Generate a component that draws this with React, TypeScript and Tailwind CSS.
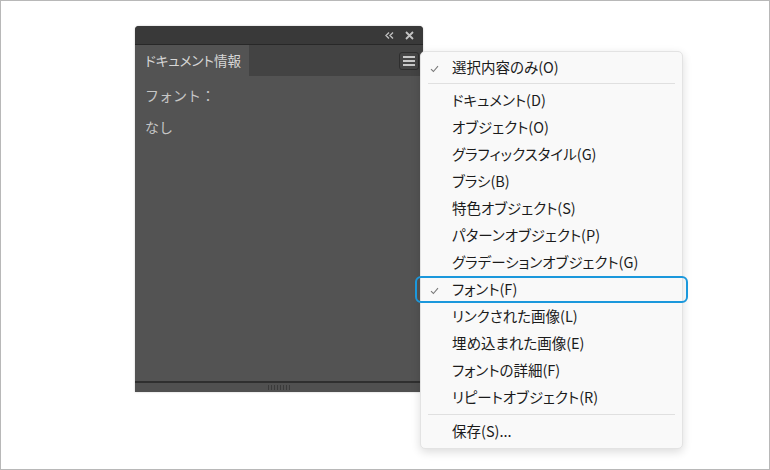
import React from "react";

const ITEMS = [
  "ドキュメント(D)",
  "オブジェクト(O)",
  "グラフィックスタイル(G)",
  "ブラシ(B)",
  "特色オブジェクト(S)",
  "パターンオブジェクト(P)",
  "グラデーションオブジェクト(G)",
  "フォント(F)",
  "リンクされた画像(L)",
  "埋め込まれた画像(E)",
  "フォントの詳細(F)",
  "リピートオブジェクト(R)",
];

const FONT = "[font-family:'Noto_Sans_CJK_JP','Noto_Sans',sans-serif]";
const PALT = "[font-feature-settings:'palt']";

function Check() {
  return (
    <svg width="9" height="8" viewBox="0 0 9 8" className="absolute left-[9px] top-1/2 -translate-y-1/2">
      <path d="M1 4.2 L3.4 6.5 L8 1.2" fill="none" stroke="#7a7a7a" strokeWidth="1.1" />
    </svg>
  );
}

function MenuItem({ label, checked, focused }: { label: string; checked?: boolean; focused?: boolean }) {
  return (
    <div className={`relative flex h-[27px] items-center pl-[31px] text-[14.5px] leading-none text-[#1b1b1b] ${PALT}`}>
      {checked && <Check />}
      <span className="-translate-y-[1px]">{label}</span>
      {focused && (
        <div className="absolute -left-[6px] -right-[6px] top-[-1px] bottom-[1px] rounded-[6px] border-2 border-[#1b98dc]" />
      )}
    </div>
  );
}

export default function App() {
  return (
    <div className={`relative h-[470px] w-[770px] overflow-hidden border border-[#b8b8b8] bg-white ${FONT}`}>
      <div className="pl-[134px] pt-[25px]">
        {/* Document info panel */}
        <div className="flex h-[366px] w-[288px] flex-col overflow-hidden rounded-t-[4px] bg-[#535353] shadow-[0_0_2px_rgba(0,0,0,0.25)]">
          <div className="flex h-[18px] items-center justify-end gap-[11px] bg-[#393939] pr-[9px] text-[#bdbdbd]">
            <svg width="9" height="7" viewBox="0 0 9 7">
              <path d="M4 0.5 L1 3.5 L4 6.5 M8 0.5 L5 3.5 L8 6.5" fill="none" stroke="#bdbdbd" strokeWidth="1.4" />
            </svg>
            <svg width="9" height="9" viewBox="0 0 9 9">
              <path d="M1 1 L8 8 M8 1 L1 8" stroke="#c4c4c4" strokeWidth="1.8" />
            </svg>
          </div>
          <div className="h-px bg-[#282828]" />
          <div className="flex h-[31px] items-stretch bg-[#434343]">
            <div className={`flex w-[114px] items-center bg-[#535353] pl-[10px] text-[13.5px] text-[#d6d6d6] ${PALT}`}>
              ドキュメント情報
            </div>
            <div className="flex flex-1 items-center justify-end pr-[4px]">
              <div className="flex h-[18px] w-[20px] flex-col items-center justify-center gap-[2px] rounded-[3px] border border-[#2e2e2e] bg-[#454545]">
                <div className="h-[2px] w-[12px] bg-[#c8c8c8]" />
                <div className="h-[2px] w-[12px] bg-[#c8c8c8]" />
                <div className="h-[2px] w-[12px] bg-[#c8c8c8]" />
              </div>
            </div>
          </div>
          <div className="flex flex-1 flex-col pl-[10px] pt-[9px] text-[14px] text-[#c6c6c6]">
            <div className="leading-[20px]">フォント：</div>
            <div className="mt-[12px] leading-[20px]">なし</div>
          </div>
          <div className="h-[2px] bg-[#2f2f2f]" />
          <div className="flex h-[9px] items-center justify-center bg-[#505050]">
            <div className="flex gap-[2px]">
              {Array.from({ length: 8 }).map((_, i) => (
                <div key={i} className="h-[5px] w-px bg-[#3a3a3a]" />
              ))}
            </div>
          </div>
        </div>
      </div>

      {/* Popup menu */}
      <div className="absolute left-[419px] top-[50px] w-[263px] rounded-[5px] border border-[#e3e3e3] bg-[#f9f9f9] pb-[2px] pt-[3px] shadow-[0_3px_10px_rgba(0,0,0,0.14)]">
        <MenuItem label="選択内容のみ(O)" checked />
        <div className="mx-[7px] mb-[4px] mt-[1px] h-px bg-[#e0e0e0]" />
        {ITEMS.map((label) => (
          <MenuItem key={label} label={label} checked={label === "フォント(F)"} focused={label === "フォント(F)"} />
        ))}
        <div className="mx-[7px] mb-[4px] mt-[2px] h-px bg-[#e0e0e0]" />
        <MenuItem label="保存(S)..." />
      </div>
    </div>
  );
}
